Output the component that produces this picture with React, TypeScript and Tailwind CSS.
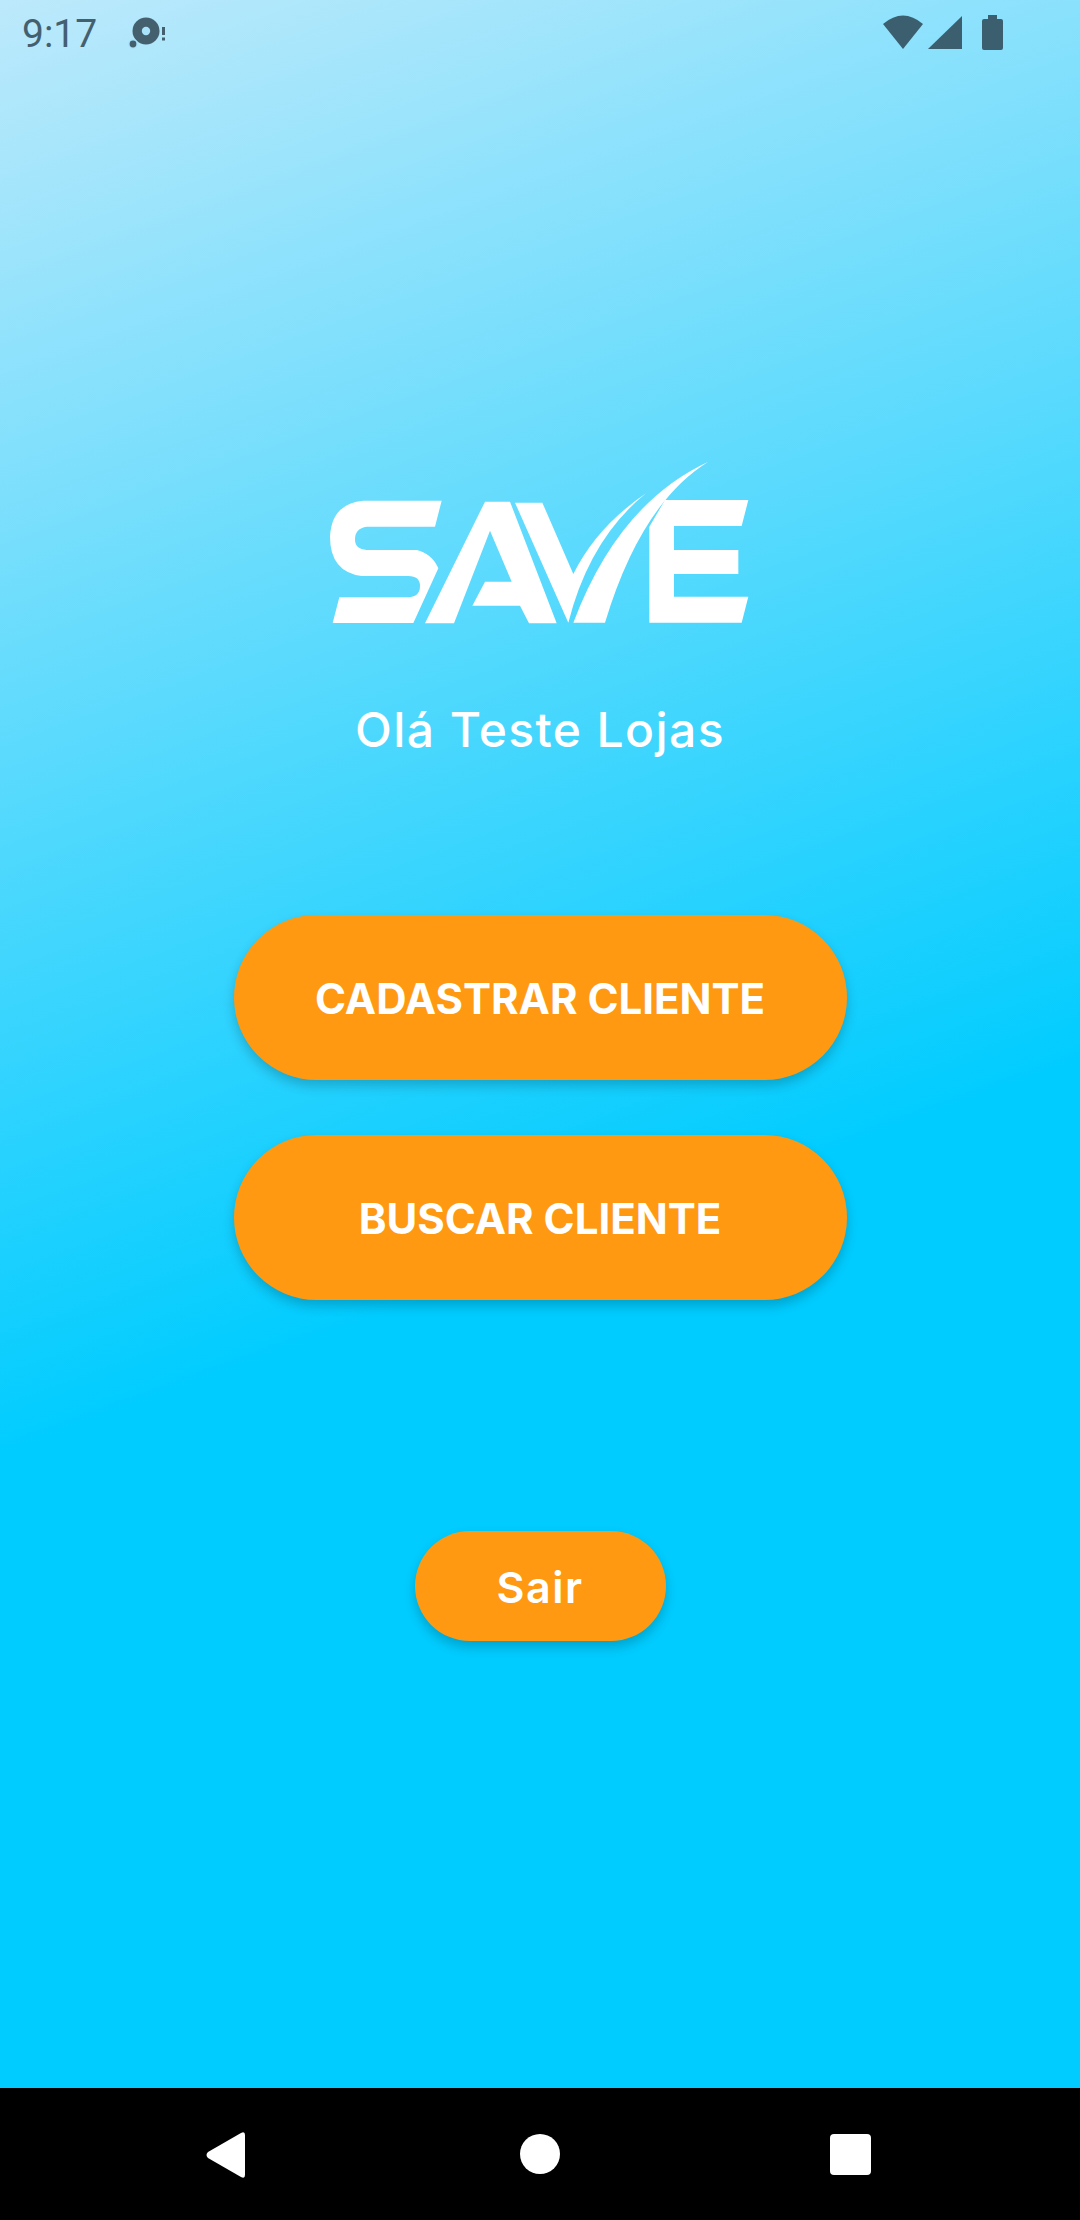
function StatusBar() {
  return (
    <div className="flex h-[72px] w-full items-start justify-between">
      <div className="flex items-start pl-[22px]">
        <span className="mt-[12px] font-['Roboto',sans-serif] text-[39px] leading-[44px] text-[#44606f]">9:17</span>
        <svg className="ml-[25px] mt-[15px]" width="46" height="34" viewBox="0 0 46 34">
          <circle cx="24" cy="16" r="13.5" fill="#44606f" />
          <circle cx="24" cy="16" r="4.2" fill="#a8e2fb" />
          <circle cx="11" cy="29" r="5" fill="#a8e2fb" />
          <circle cx="11" cy="29" r="3.4" fill="#44606f" />
          <rect x="40" y="12" width="3" height="8" fill="#44606f" />
          <rect x="40" y="22.5" width="3" height="3" fill="#44606f" />
        </svg>
      </div>
      <svg className="mr-[77px] mt-[15px]" width="120" height="36" viewBox="883 15 120 36">
        <path d="M903 49 L883 24 Q903 7 923 24 Z" fill="#3b5f6f" />
        <path d="M928 49 L962 16 V49 Z" fill="#3b5f6f" />
        <path d="M988 15 H997 V19 H1001 Q1003 19 1003 21 V48 Q1003 50 1001 50 H984 Q982 50 982 48 V21 Q982 19 984 19 H988 Z" fill="#3b5f6f" />
      </svg>
    </div>
  );
}

function Logo() {
  return (
    <svg className="mt-[368px]" width="460" height="200" viewBox="0 0 1380 600" fill="#ffffff">
      <path d="M395 182 L375 260 H170 Q135 265 135 298 Q135 328 170 330 H320 Q365 340 385 385 L310 549 H68 L88 472 H295 Q330 470 330 438 Q330 408 295 408 H155 Q60 395 60 290 Q65 190 160 182 Z" />
      <path d="M345 550 L525 185 H600 L740 550 H657 L630 497 H487 L525 425 H605 L540 272 L432 550 Z" />
      <path d="M615 188 H697 L790 402 Q861 259 1008 160 Q839 296 775 548 Z" />
      <path d="M1195 65 Q925 190 790 548 H885 Q993 190 1195 65 Z" />
      <path d="M1065 180 H1315 L1295 258 H1092 V330 H1285 V402 H1092 V470 H1315 L1295 548 H1018 V260 Z" />
    </svg>
  );
}

function Pill({ label, className }: { label: string; className: string }) {
  return (
    <button className={`flex items-center justify-center rounded-full bg-[#ff9911] pt-[2px] font-['Inter',sans-serif] text-white shadow-[0_6px_12px_rgba(0,0,0,0.2)] ${className}`}>
      {label}
    </button>
  );
}

export default function App() {
  return (
    <div className="flex h-[2220px] w-[1080px] flex-col overflow-hidden">
      <main className="flex h-[2088px] w-full flex-col items-center bg-[linear-gradient(160deg,#bde9fb_0%,#00ccff_59%)]">
        <StatusBar />
        <Logo />
        <p className="mt-[60px] font-['Inter',sans-serif] text-[48px] font-medium leading-[60px] tracking-[1.4px] text-white">Olá Teste Lojas</p>
        <Pill label="CADASTRAR CLIENTE" className="mt-[155px] h-[165px] w-[613px] text-[42px] font-bold" />
        <Pill label="BUSCAR CLIENTE" className="mt-[55px] h-[165px] w-[613px] text-[42px] font-bold" />
        <Pill label="Sair" className="mt-[231px] h-[110px] w-[251px] text-[43px] font-semibold tracking-[1.5px]" />
      </main>
      <nav className="flex h-[132px] w-full items-start bg-black pl-[206px] pt-[44px]">
        <svg width="40" height="46" viewBox="0 0 40 46">
          <path d="M35 1 Q39 -1 39 3 V43 Q39 47 35 45 L2 26 Q-1 23 2 20 Z" fill="#ffffff" />
        </svg>
        <div className="ml-[274px] mt-[2px] h-[40px] w-[40px] rounded-full bg-white" />
        <div className="ml-[270px] mt-[2px] h-[41px] w-[41px] rounded-[4px] bg-white" />
      </nav>
    </div>
  );
}
